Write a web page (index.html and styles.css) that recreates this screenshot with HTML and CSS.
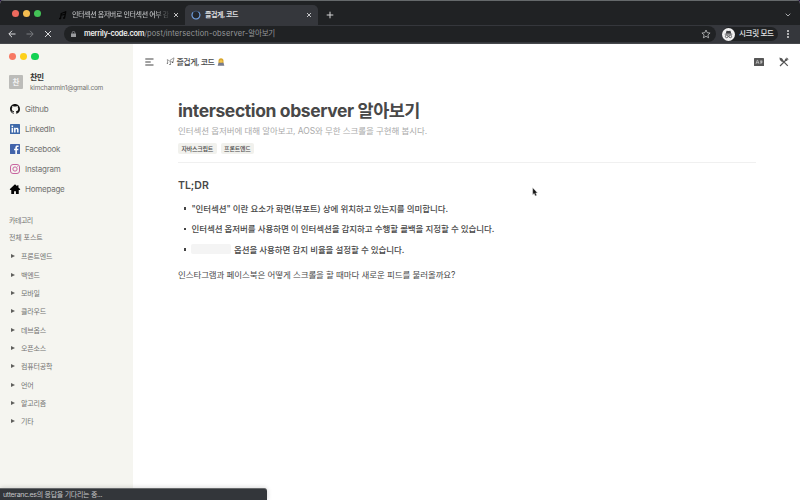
FILE: index.html
```html
<!DOCTYPE html>
<html lang="ko">
<head>
<meta charset="utf-8">
<title>즐겁게, 코드</title>
<link rel="stylesheet" href="styles.css">
</head>
<body>
<div class="window">
  <header class="tabs">
    <div class="lights"><i class="red"></i><i class="yellow"></i><i class="green"></i></div>
    <div class="tab">
      <svg class="favicon" viewBox="0 0 10 10"><path d="M1 8.500h1.500L3.300 3M5 8h1.500L7.800 1.500M3.300 3.500l5-2M2.500 5.500l5-1.500" fill="none" stroke="#050505" stroke-width="1.300"/></svg>
      <span class="tab-title faded">인터섹션 옵저버로 인터섹션 여부 감</span>
      <svg class="x" viewBox="0 0 6 6"><path d="M1 1l4 4M5 1L1 5"/></svg>
    </div>
    <div class="tab active">
      <svg class="spinner" viewBox="0 0 10 10"><circle cx="5" cy="5" r="4" fill="#22262c" stroke="#3d526f" stroke-width="1"/><path d="M7.500 1.900A4 4 0 1 1 2 2.300" fill="none" stroke="#6f9bd6" stroke-width="1.100"/></svg>
      <span class="tab-title">즐겁게, 코드</span>
      <svg class="x" viewBox="0 0 6 6"><path d="M1 1l4 4M5 1L1 5"/></svg>
    </div>
    <svg class="plus" viewBox="0 0 8 8"><path d="M4 .7v6.600M.7 4h6.600"/></svg>
    <svg class="chevron" viewBox="0 0 6 4"><path d="M.7.700L3 3 5.300.700"/></svg>
  </header>
  <nav class="toolbar">
    <svg class="nav-icon" viewBox="0 0 8 8"><path d="M7.500 4H1M4 .8L.8 4 4 7.200"/></svg>
    <svg class="nav-icon dim" viewBox="0 0 8 8"><path d="M.5 4H7M4 .8L7.200 4 4 7.200"/></svg>
    <svg class="nav-icon stop" viewBox="0 0 8 8"><path d="M1 1l6 6M7 1L1 7"/></svg>
    <div class="address">
      <svg class="lock" viewBox="0 0 5 6"><path d="M0 2.400h5V6H0z" fill="#9a9c9f"/><path d="M1.200 2.600V1.700a1.300 1.300 0 0 1 2.600 0v.9" fill="none" stroke="#9a9c9f" stroke-width=".7"/></svg>
      <span class="url"><b>merrily-code.com</b>/post/intersection-observer-<span class="slug">알아보기</span></span>
      <svg class="star" viewBox="0 0 10 10"><path d="M5 1l1.200 2.700 2.900.3-2.200 1.900.7 2.900L5 7.300 2.400 8.800l.7-2.900L.9 4l2.900-.3z"/></svg>
    </div>
    <div class="secret">
      <svg viewBox="0 0 12 12"><circle cx="6" cy="6" r="6" fill="#f1f1f1"/><path d="M4.200 2.500l1.800.3 1.800-.3.700 2.500h-5zM2.500 5.200h7v.7h-7z" fill="#3c3d40"/><g fill="none" stroke="#3c3d40" stroke-width=".7"><circle cx="4.300" cy="7.800" r="1.200"/><circle cx="7.700" cy="7.800" r="1.200"/><path d="M5.500 7.500h1"/></g></svg>
      <span>시크릿 모드</span>
    </div>
    <div class="more"><i></i><i></i><i></i></div>
  </nav>
  <div class="page">
    <aside class="sidebar">
      <div class="dots"><i class="coral"></i><i class="gold"></i><i class="lime"></i></div>
      <div class="profile">
        <div class="avatar">찬</div>
        <div><div class="name">찬민</div><div class="email">kimchanmin1@gmail.com</div></div>
      </div>
      <ul class="links">
        <li><svg viewBox="0 0 16 16"><path d="M8 0C3.580 0 0 3.580 0 8c0 3.540 2.290 6.530 5.470 7.590.4.070.55-.17.55-.38v-1.490c-2.010.37-2.530-.49-2.690-.94-.09-.23-.48-.94-.82-1.130-.28-.15-.68-.52-.01-.53.63-.01 1.080.58 1.230.82.720 1.210 1.870.87 2.330.66.070-.52.280-.87.510-1.070-1.780-.2-3.640-.89-3.640-3.950 0-.87.310-1.590.82-2.150-.08-.2-.36-1.020.08-2.120 0 0 .67-.21 2.200.82a7.600 7.600 0 0 1 4 0c1.530-1.040 2.200-.82 2.200-.82.44 1.100.16 1.920.08 2.120.51.560.82 1.270.82 2.150 0 3.070-1.870 3.750-3.650 3.950.29.250.54.730.54 1.480v2.200c0 .21.150.46.550.38A8 8 0 0 0 16 8c0-4.420-3.580-8-8-8z" fill="#111"/></svg>Github</li>
        <li><svg viewBox="0 0 16 16"><rect width="16" height="16" rx="1" fill="#3e69a9"/><path d="M2.500 6H5v7.500H2.500zM2.500 2.500H5v2.200H2.500zM6.500 6h2.300v1c1.300-1.900 4.900-1.500 4.900 1.800v4.700h-2.400V9.300c0-1.900-2.400-1.600-2.400 0v4.200H6.500z" fill="#fff"/></svg>LinkedIn</li>
        <li><svg viewBox="0 0 16 16"><rect width="16" height="16" rx="1" fill="#4264aa"/><path d="M8.500 16v-6H6.500V7.500h2V5.800c0-2.300 1.400-3.300 3.300-3.300h1.900v2.300h-1.300c-1.100 0-1.300.5-1.300 1.300v1.400h2.500l-.4 2.500h-2.100v6z" fill="#fff"/></svg>Facebook</li>
        <li><svg viewBox="0 0 16 16" fill="none" stroke="#c45b9b" stroke-width="1.500"><rect x=".8" y=".8" width="14.400" height="14.400" rx="4"/><circle cx="8" cy="8" r="3.400"/><path d="M11.800 3.800h1"/></svg>Instagram</li>
        <li><svg viewBox="0 0 16 16"><path d="M8 .5L-.5 8.500l1 1H2V16h4.500v-4.500h3V16H14V9.500h1.500l1-1-3-3V2h-2v1.700z" fill="#050505"/></svg>Homepage</li>
      </ul>
      <div class="category">카테고리</div>
      <div class="all">전체 포스트</div>
      <ul class="tree">
        <li>프론트엔드</li><li>백엔드</li><li>모바일</li><li>클라우드</li><li>데브옵스</li><li>오픈소스</li><li>컴퓨터공학</li><li>언어</li><li>알고리즘</li><li>기타</li>
      </ul>
    </aside>
    <main>
      <div class="topbar">
        <svg class="menu" viewBox="0 0 9 8"><path d="M.3 1h8.200M.3 4h5.400M.3 7h8.200"/></svg>
        <svg class="notes" viewBox="0 0 9 9"><path d="M1.800 6L1.300 2.500 3.500 4M4.600 7.300L4 3.300 8 .8M4.300 4.500L7 5.300 8 .8" fill="none" stroke="#777" stroke-width=".7"/><path d="M.8 6.300h1.200M3.400 7.500h1.200M6 5.400h1.200" stroke="#555" stroke-width="1.100"/></svg>
        <span class="brand">즐겁게, 코드</span>
        <svg class="coder" viewBox="0 0 8 8"><path d="M1.500 5.500V2.700a2.500 2.500 0 0 1 5 0v2.800z" fill="#d9a72e"/><circle cx="4" cy="3.500" r="1.500" fill="#f3c54d"/><path d="M.7 7.700l.8-3h5l.8 3z" fill="#777b8d"/></svg>
        <svg class="lang" viewBox="0 0 10 8"><rect width="10" height="8" rx=".6" fill="#565656"/><path d="M2 5.800l1.200-3.500h.5L5 5.800M2.500 4.700h2M6 3.200h2.500M7.200 2.400v3.200M6 5.200l2.500-1" fill="none" stroke="#e2e2e2" stroke-width=".6"/></svg>
        <svg class="tools" viewBox="0 0 10 10"><path d="M1.500 1.500l7.300 7.300M7 3L1 9" stroke="#555" stroke-width="1.200"/><path d="M.4.600l2.800 1 1.300 2.600L3 5 .9 3z" fill="#555"/><path d="M5.900 2.300L7.800.400 9.600 2.200 7.700 4.100 6 4z" fill="#555"/><path d="M7 2.200L8.700.500M8 3.200L9.600 1.500" stroke="#fff" stroke-width=".35"/></svg>
      </div>
      <article>
        <h1>intersection observer <span>알아보기</span></h1>
        <p class="subtitle">인터섹션 옵저버에 대해 알아보고, AOS와 무한 스크롤을 구현해 봅시다.</p>
        <div class="tags"><span>자바스크립트</span><span>프론트엔드</span></div>
        <h2>TL;DR</h2>
        <ul class="points">
          <li>"인터섹션" 이란 요소가 화면(뷰포트) 상에 위치하고 있는지를 의미합니다.</li>
          <li>인터섹션 옵저버를 사용하면 이 인터섹션을 감지하고 수행할 콜백을 지정할 수 있습니다.</li>
          <li><span class="code"></span>옵션을 사용하면 감지 비율을 설정할 수 있습니다.</li>
        </ul>
        <p class="question">인스타그램과 페이스북은 어떻게 스크롤을 할 때마다 새로운 피드를 불러올까요?</p>
      </article>
    </main>
  </div>
  <div class="status">utteranc.es의 응답을 기다리는 중...</div>
  <svg class="cursor" viewBox="0 0 6 10"><path d="M.7.700v7l1.500-1.300 1 2.500 1.500-.6-1-2.400h1.800z" fill="#111" stroke="#ddd" stroke-width=".5"/></svg>
</div>
</body>
</html>
```
FILE: styles.css
```css
* { box-sizing: border-box; }
body { margin: 0; font-family: Inter, "Noto Sans CJK KR", sans-serif; color: #484848; background: #241542; }
ul, p, h1, h2 { margin: 0; padding: 0; list-style: none; }
svg { display: block; flex: none; }
.window { position: relative; width: 800px; height: 500px; overflow: hidden; display: flex; flex-direction: column; border-radius: 4px 4px 0 0; background: #fff; white-space: nowrap; }

.tabs { height: 25px; flex: none; display: flex; align-items: center; background: #202224; border-top: 1px solid #65696b; padding-left: 12px; }
.lights { display: flex; gap: 4px; width: 43px; }
.lights i { width: 7px; height: 7px; border-radius: 50%; }
.red { background: #ed6a5e; }
.yellow { background: #f4bd50; }
.green { background: #43c256; }
.tab { width: 130px; height: 20px; margin-top: 4px; display: flex; align-items: center; padding: 0 6px 0 3px; color: #b7b9bb; }
.favicon, .spinner { width: 10px; height: 10px; }
.tab-title { font-size: 7px; font-weight: 500; letter-spacing: -.15px; line-height: 12px; margin-left: 4px; flex: 1; }
.faded { width: 97px; flex: none; letter-spacing: -.38px; mask-image: linear-gradient(90deg, #000 85%, transparent 102%); }
.x { width: 6px; height: 6px; margin-left: auto; stroke: #d4d5d6; fill: none; stroke-width: .9; }
.active { background: #35373c; border-radius: 5px 5px 0 0; width: 133px; color: #dedfe0; padding: 0 6px; }
.active .tab-title { font-weight: 600; letter-spacing: -.45px; }
.plus { width: 8px; height: 8px; margin: 4px 0 0 8px; stroke: #d4d5d6; stroke-width: 1; }
.chevron { width: 6px; height: 4px; margin: 4px 9px 0 auto; fill: none; stroke: #b7b9bb; stroke-width: .9; }

.toolbar { height: 19px; flex: none; display: flex; align-items: center; background: #35373c; padding: 0 8px; border-bottom: 1px solid #46484c; }
.nav-icon { width: 8px; height: 8px; margin-right: 10px; fill: none; stroke: #dadbdd; stroke-width: 1; }
.dim { stroke: #7b7d80; }
.stop { margin-right: 12px; }
.address { width: 652px; height: 16px; border-radius: 8px; background: #202224; display: flex; align-items: center; padding: 0 5px 0 7px; }
.lock { width: 5px; height: 6px; margin-right: 8px; }
.url { font-size: 7.500px; line-height: 14px; color: #96989b; letter-spacing: .12px; }
.url b { font-weight: 600; color: #eee; letter-spacing: -.3px; }
.slug { letter-spacing: -.25px; }
.star { width: 10px; height: 10px; margin-left: auto; fill: none; stroke: #c0c1c3; stroke-width: .8; }
.secret { width: 56px; height: 14px; margin-left: 6px; border-radius: 7px; background: #202224; display: flex; align-items: center; gap: 4px; font-size: 7.500px; font-weight: 500; letter-spacing: -.3px; color: #e4e5e6; line-height: 12px; }
.secret svg { width: 13px; height: 13px; }
.more { margin-left: 9px; display: flex; flex-direction: column; gap: 1.400px; }
.more i { width: 1.600px; height: 1.600px; border-radius: 50%; background: #ccc; }

.page { display: flex; flex: 1; min-height: 0; }
.sidebar { width: 133.400px; flex: none; background: #f5f5f0; padding: 9px 9px 0; color: #737371; }
.dots { display: flex; gap: 4px; height: 7px; }
.dots i { width: 7.200px; height: 7px; border-radius: 50%; }
.coral { background: #f77963; }
.gold { background: #fdd01a; }
.lime { background: #13d253; }
.profile { display: flex; align-items: center; height: 22px; margin-top: 11px; }
.avatar { width: 14px; height: 14px; margin-right: 7px; background: #bcbcb9; color: #f2f2f2; border-radius: 1px; font-size: 7.500px; font-weight: 600; line-height: 15px; text-align: center; }
.name { color: #373735; font-size: 8px; font-weight: 600; line-height: 10px; letter-spacing: -.5px; }
.email { font-size: 6.500px; line-height: 10px; margin-top: 1px; letter-spacing: -.2px; }
.links { margin-top: 6px; }
.links li { height: 20px; display: flex; align-items: center; font-size: 8px; letter-spacing: -.25px; }
.links svg { width: 10px; height: 10px; margin: 0 5px 0 1px; overflow: visible; }
.category { margin-top: 15px; font-size: 7px; line-height: 14px; letter-spacing: -.5px; }
.all { font-size: 7px; line-height: 14px; margin-top: 3px; letter-spacing: -.1px; }
.tree { margin-top: 2px; }
.tree li { height: 18.350px; display: flex; align-items: center; font-size: 7px; letter-spacing: -.2px; }
.tree li::before { content: ""; border: 2.500px solid transparent; border-width: 2.500px 0 2.500px 4px; border-left-color: #5f5f5d; margin: 0 6px 0 2px; }

main { flex: 1; background: #fff; }
.topbar { height: 35px; display: flex; align-items: center; padding: 0 11px 0 12px; }
.menu { width: 9px; height: 8px; fill: none; stroke: #444; stroke-width: 1.200; }
.notes { width: 9px; height: 9px; margin-left: 12px; }
.brand { margin-left: 1px; font-size: 8px; font-weight: 500; letter-spacing: -.45px; line-height: 12px; }
.coder { width: 8px; height: 8px; margin-left: 2px; }
.lang { width: 10px; height: 8px; margin-left: auto; }
.tools { width: 10px; height: 10px; margin-left: 15px; }
article { padding: 20px 44px 0 44.600px; }
h1 { font-size: 17.500px; line-height: 24px; font-weight: 700; letter-spacing: -.39px; }
h1 span { letter-spacing: -.5px; }
.subtitle { font-size: 8.500px; line-height: 16px; color: #aaa; letter-spacing: -.09px; }
.tags { display: flex; gap: 4px; padding: 4px 0 8px; border-bottom: 1px solid #f0f0f0; }
.tags span { height: 11px; padding: 0 3.500px; background: #f1f1ed; border-radius: 2px; font-size: 6px; line-height: 11px; font-weight: 500; letter-spacing: -.25px; }
h2 { margin-top: 14.500px; font-size: 10.500px; line-height: 16px; font-weight: 600; }
.points { margin-top: 4px; }
.points li { height: 20.500px; display: flex; align-items: center; font-size: 8.500px; letter-spacing: -.085px; font-weight: 500; }
.points li::before { content: ""; width: 2.500px; height: 2.500px; background: #444; margin: 1px 5px 0 6px; }
.code { width: 40px; height: 10px; background: #f4f4f4; border-radius: 2px; margin-right: 2.500px; }
.question { margin-top: 8px; font-size: 8.500px; line-height: 16px; letter-spacing: -.1px; }

.status { position: absolute; left: 0; bottom: 0; width: 267px; height: 12px; background: #33363a; border-top: 1px solid #67696b; border-radius: 0 3px 0 0; color: #c3c5c7; font-size: 7px; line-height: 11px; padding-left: 3px; letter-spacing: -.3px; box-shadow: 0 0 5px #0003; }
.cursor { position: absolute; left: 532px; top: 187px; width: 6px; height: 10px; }
```
